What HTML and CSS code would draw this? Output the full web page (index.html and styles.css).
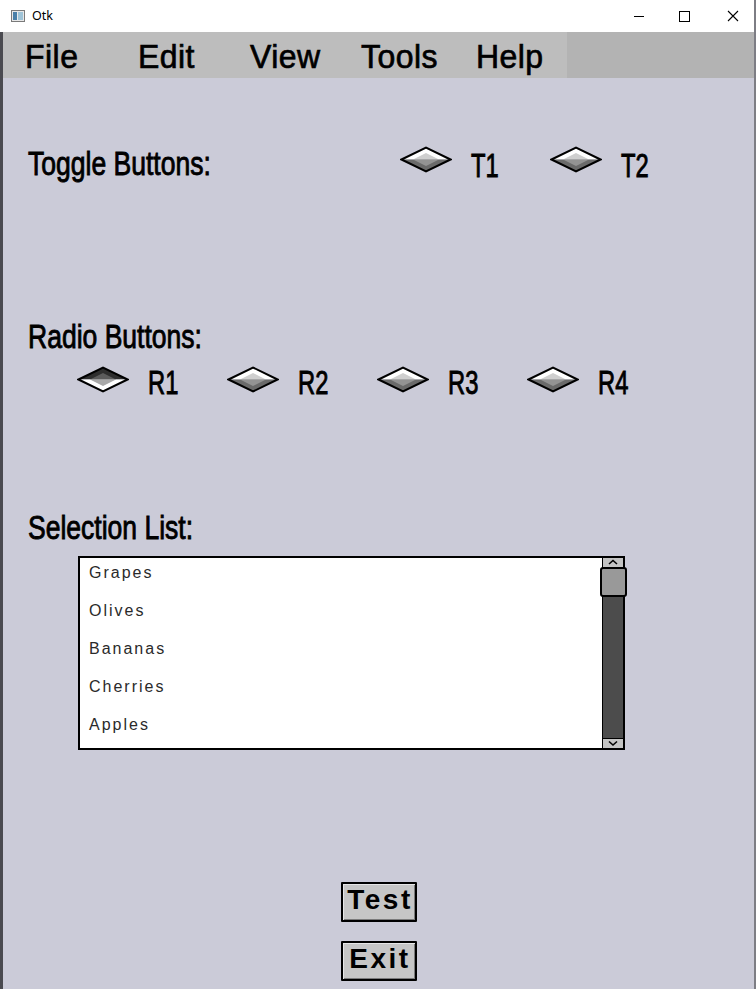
FILE: index.html
```html
<!DOCTYPE html>
<html>
<head>
<meta charset="utf-8">
<title>Otk</title>
<link rel="stylesheet" href="styles.css">
</head>
<body>
<div class="window">
  <div class="titlebar">
    <svg class="app-icon" width="14" height="12" viewBox="0 0 14 12">
      <rect x="0.5" y="0.5" width="13" height="11" fill="#e8e8e8" stroke="#7a7a7a"/>
      <rect x="2" y="2" width="4" height="8" fill="#4a7fa8"/>
      <rect x="7" y="2" width="5" height="8" fill="#9fc4d8"/>
    </svg>
    <span class="title">Otk</span>
    <div class="controls">
      <svg class="ctl" width="46" height="30" viewBox="0 0 46 30"><line x1="18" y1="16.5" x2="28" y2="16.5" stroke="#000" stroke-width="1"/></svg>
      <svg class="ctl" width="46" height="30" viewBox="0 0 46 30"><rect x="17.5" y="11.5" width="10" height="10" fill="none" stroke="#000" stroke-width="1"/></svg>
      <svg class="ctl" width="46" height="30" viewBox="0 0 46 30"><path d="M20 11 L30 21 M30 11 L20 21" stroke="#000" stroke-width="1.1"/></svg>
    </div>
  </div>
  <div class="client">
    <div class="menubar">
      <div class="menus">
        <span class="menu">File</span>
        <span class="menu">Edit</span>
        <span class="menu">View</span>
        <span class="menu">Tools</span>
        <span class="menu">Help</span>
      </div>
      <div class="menu-fill"></div>
    </div>
    <div class="content">
      <div class="toggle-row">
        <div class="label-cell"><span class="label">Toggle Buttons:</span></div>
        <div class="opt">
          <svg class="diamond" width="52" height="27" viewBox="0 0 52 27">
            <polygon points="1.5,13.5 26,1.5 50.5,13.5" fill="#fff"/>
            <polygon points="1.5,13.5 26,25.5 50.5,13.5" fill="#6a6a6a"/>
            <polygon points="13,13.5 26,7 39,13.5" fill="#cfcfcf"/>
            <polygon points="13,13.5 26,20 39,13.5" fill="#939393"/>
            <polygon points="1.5,13.5 26,1.5 50.5,13.5 26,25.5" fill="none" stroke="#000" stroke-width="2"/>
          </svg>
          <span class="opt-text toggle-text">T1</span>
        </div>
        <div class="opt">
          <svg class="diamond" width="52" height="27" viewBox="0 0 52 27">
            <polygon points="1.5,13.5 26,1.5 50.5,13.5" fill="#fff"/>
            <polygon points="1.5,13.5 26,25.5 50.5,13.5" fill="#6a6a6a"/>
            <polygon points="13,13.5 26,7 39,13.5" fill="#cfcfcf"/>
            <polygon points="13,13.5 26,20 39,13.5" fill="#939393"/>
            <polygon points="1.5,13.5 26,1.5 50.5,13.5 26,25.5" fill="none" stroke="#000" stroke-width="2"/>
          </svg>
          <span class="opt-text toggle-text">T2</span>
        </div>
      </div>

      <div class="label-block radio-label"><span class="label">Radio Buttons:</span></div>
      <div class="radio-row">
        <div class="opt">
          <svg class="diamond" width="52" height="27" viewBox="0 0 52 27">
            <polygon points="1.5,13.5 26,1.5 50.5,13.5" fill="#2e2e2e"/>
            <polygon points="1.5,13.5 26,25.5 50.5,13.5" fill="#fff"/>
            <polygon points="13,13.5 26,7 39,13.5" fill="#5c5c5c"/>
            <polygon points="13,13.5 26,20 39,13.5" fill="#a8a8a8"/>
            <polygon points="1.5,13.5 26,1.5 50.5,13.5 26,25.5" fill="none" stroke="#000" stroke-width="2"/>
          </svg>
          <span class="opt-text">R1</span>
        </div>
        <div class="opt">
          <svg class="diamond" width="52" height="27" viewBox="0 0 52 27">
            <polygon points="1.5,13.5 26,1.5 50.5,13.5" fill="#fff"/>
            <polygon points="1.5,13.5 26,25.5 50.5,13.5" fill="#6a6a6a"/>
            <polygon points="13,13.5 26,7 39,13.5" fill="#cfcfcf"/>
            <polygon points="13,13.5 26,20 39,13.5" fill="#939393"/>
            <polygon points="1.5,13.5 26,1.5 50.5,13.5 26,25.5" fill="none" stroke="#000" stroke-width="2"/>
          </svg>
          <span class="opt-text">R2</span>
        </div>
        <div class="opt">
          <svg class="diamond" width="52" height="27" viewBox="0 0 52 27">
            <polygon points="1.5,13.5 26,1.5 50.5,13.5" fill="#fff"/>
            <polygon points="1.5,13.5 26,25.5 50.5,13.5" fill="#6a6a6a"/>
            <polygon points="13,13.5 26,7 39,13.5" fill="#cfcfcf"/>
            <polygon points="13,13.5 26,20 39,13.5" fill="#939393"/>
            <polygon points="1.5,13.5 26,1.5 50.5,13.5 26,25.5" fill="none" stroke="#000" stroke-width="2"/>
          </svg>
          <span class="opt-text">R3</span>
        </div>
        <div class="opt">
          <svg class="diamond" width="52" height="27" viewBox="0 0 52 27">
            <polygon points="1.5,13.5 26,1.5 50.5,13.5" fill="#fff"/>
            <polygon points="1.5,13.5 26,25.5 50.5,13.5" fill="#6a6a6a"/>
            <polygon points="13,13.5 26,7 39,13.5" fill="#cfcfcf"/>
            <polygon points="13,13.5 26,20 39,13.5" fill="#939393"/>
            <polygon points="1.5,13.5 26,1.5 50.5,13.5 26,25.5" fill="none" stroke="#000" stroke-width="2"/>
          </svg>
          <span class="opt-text">R4</span>
        </div>
      </div>

      <div class="label-block list-label"><span class="label">Selection List:</span></div>
      <div class="listbox">
        <ul class="items">
          <li>Grapes</li>
          <li>Olives</li>
          <li>Bananas</li>
          <li>Cherries</li>
          <li>Apples</li>
        </ul>
        <div class="scrollbar">
          <div class="arrow arrow-up">
            <svg width="20" height="9" viewBox="0 0 20 9"><path d="M6 6 L10 2.5 L14 6" fill="none" stroke="#000" stroke-width="1.6"/></svg>
          </div>
          <div class="track"></div>
          <div class="thumb"></div>
          <div class="arrow arrow-down">
            <svg width="20" height="9" viewBox="0 0 20 9"><path d="M6 2.5 L10 6 L14 2.5" fill="none" stroke="#000" stroke-width="1.6"/></svg>
          </div>
        </div>
      </div>

      <div class="buttons">
        <button class="btn">Test</button>
        <button class="btn">Exit</button>
      </div>
    </div>
  </div>
</div>
</body>
</html>
```

FILE: styles.css
```css
* { box-sizing: border-box; }

html, body {
  margin: 0;
  padding: 0;
  width: 756px;
  height: 989px;
  overflow: hidden;
  background: #cbcbd8;
}

.window {
  width: 756px;
  height: 989px;
  display: flex;
  flex-direction: column;
  border-right: 2px solid #7d7d84;
}

.titlebar {
  height: 32px;
  background: #ffffff;
  display: flex;
  align-items: center;
  padding-left: 11px;
  flex: none;
}

.app-icon { display: block; }

.title {
  font-family: "Noto Sans", "Open Sans", sans-serif;
  font-size: 12.5px;
  color: #000;
  margin-left: 7px;
  line-height: 16px;
}

.controls {
  margin-left: auto;
  display: flex;
  align-self: flex-start;
}

.ctl { display: block; }

.client {
  flex: 1;
  display: flex;
  flex-direction: column;
  border-left: 3px solid #4a4a50;
  background: #cbcbd8;
}

.menubar {
  height: 46px;
  display: flex;
  flex: none;
}

.menus {
  width: 564px;
  background: #bdbdbd;
  display: grid;
  grid-template-columns: 113px 112px 111px 115px auto;
  padding-left: 22px;
  padding-top: 3px;
}

.menu {
  display: inline-block;
  font-family: "Liberation Sans", Arial, sans-serif;
  font-size: 34px;
  line-height: 43px;
  color: #000;
  -webkit-text-stroke: 0.7px #000;
  transform: scaleX(0.94);
  transform-origin: left center;
  letter-spacing: 0.5px;
}

.menu-fill {
  flex: 1;
  background: #b3b3b3;
}

.content {
  padding-left: 25px;
  display: flex;
  flex-direction: column;
}

.label {
  display: inline-block;
  font-family: "Liberation Sans", Arial, sans-serif;
  font-size: 34px;
  line-height: 34px;
  color: #000;
  transform: scaleX(0.78);
  transform-origin: left center;
  white-space: nowrap;
  -webkit-text-stroke: 0.9px #000;
}

.toggle-row {
  margin-top: 68px;
  display: flex;
  height: 34px;
}

.label-cell { width: 373px; }

.opt {
  width: 150px;
  display: flex;
  align-items: flex-start;
  gap: 19px;
}

.diamond { display: block; margin-left: -1px; }

.opt-text {
  display: inline-block;
  font-family: "Liberation Sans", Arial, sans-serif;
  font-size: 33px;
  line-height: 34px;
  color: #000;
  transform: scaleX(0.72);
  transform-origin: left center;
  -webkit-text-stroke: 0.9px #000;
}

.toggle-text { margin-top: 3px; }

.radio-label { margin-top: 139px; height: 34px; }

.radio-row {
  margin-top: 13px;
  padding-left: 50px;
  display: flex;
  height: 34px;
}

.list-label { margin-top: 110px; height: 34px; }

.listbox {
  margin-top: 12px;
  margin-left: 50px;
  width: 547px;
  height: 194px;
  border: 2px solid #000;
  background: #fff;
  display: flex;
}

.items {
  list-style: none;
  margin: 0;
  padding: 5px 0 0 9px;
  flex: 1;
}

.items li {
  height: 38px;
  font-family: "Liberation Sans", Arial, sans-serif;
  font-size: 16px;
  line-height: 20px;
  letter-spacing: 2px;
  color: #2a2a2a;
}

.scrollbar {
  width: 21px;
  border-left: 1px solid #000;
  display: flex;
  flex-direction: column;
  position: relative;
}

.arrow {
  height: 10px;
  background: #c4c4c4;
  display: flex;
  align-items: center;
  justify-content: center;
  flex: none;
}

.arrow svg { display: block; }

.arrow-up { border-bottom: 1px solid #000; }
.arrow-down { border-top: 1px solid #000; }

.track {
  flex: 1;
  background: #4c4c4c;
}

.thumb {
  position: absolute;
  left: -3px;
  top: 9px;
  width: 27px;
  height: 30px;
  background: #999999;
  border: 2px solid #000;
  border-radius: 3px;
}

.buttons {
  margin-top: 132px;
  display: flex;
  flex-direction: column;
  align-items: center;
  gap: 19px;
  margin-left: -25px;
  padding-left: 1px;
}

.btn {
  width: 76px;
  height: 40px;
  margin: 0;
  padding: 0 0 5px 2px;
  background: #c6c6c6;
  border: 2px solid #000;
  border-radius: 1px;
  box-shadow: inset 1px 1px 0 #e6e6e6, inset -1px -1px 0 #7a7a7a;
  font-family: "Liberation Sans", Arial, sans-serif;
  font-weight: bold;
  font-size: 28px;
  line-height: 31px;
  letter-spacing: 2.5px;
  color: #000;
  text-align: center;
}
```
